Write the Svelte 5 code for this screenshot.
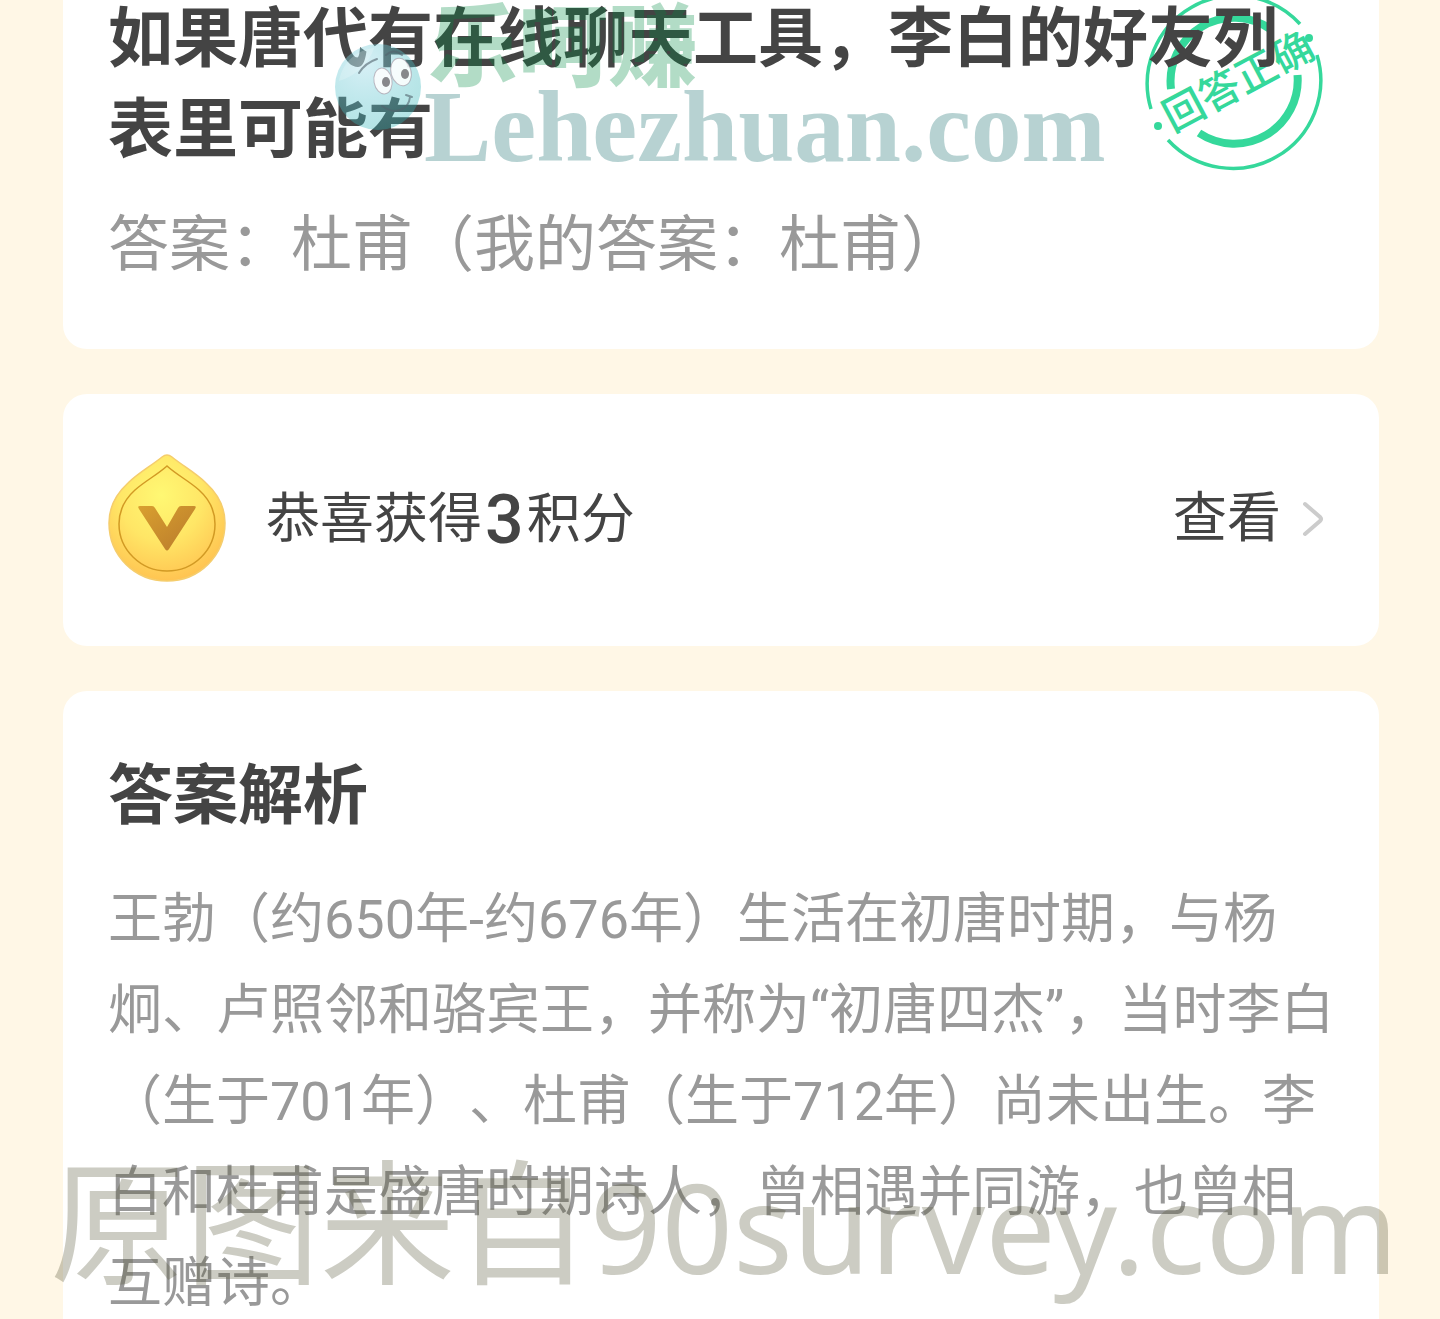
<script>
  const question = "如果唐代有在线聊天工具，李白的好友列表里可能有";
  const answer = "杜甫";
  const mine = "杜甫";
  const points = 3;
  const analysis =
    "王勃（约650年-约676年）生活在初唐时期，与杨炯、卢照邻和骆宾王，并称为“初唐四杰”，当时李白（生于701年）、杜甫（生于712年）尚未出生。李白和杜甫是盛唐时期诗人，曾相遇并同游，也曾相互赠诗。";
</script>

<div class="page">
  <main>
    <section class="card result">
      <!-- "correct" stamp, sits under the question text -->
      <svg class="stamp" viewBox="0 0 184 184" fill="none" stroke="#35d89b">
        <path d="M158 34 A88 88 0 0 0 9 119" stroke-width="3.5" />
        <path d="M175 65 A88 88 0 0 1 26 150" stroke-width="3.5" />
        <path d="M29 99 A63.5 63.5 0 0 1 128 39" stroke-width="8" />
        <path d="M155.5 85 A63.5 63.5 0 0 1 57 143" stroke-width="8" />
        <circle cx="16" cy="136" r="4" fill="#35d89b" stroke="none" />
        <circle cx="167" cy="48" r="4" fill="#35d89b" stroke="none" />
        <text
          x="96"
          y="106"
          text-anchor="middle"
          transform="rotate(-28 96 91)"
          fill="#35d89b"
          stroke="none">回答正确</text>
      </svg>
      <h1>{question}</h1>
      <p class="answer">答案：{answer}（我的答案：{mine}）</p>
    </section>

    <section class="card points">
      <svg class="coin" viewBox="0 0 118 128">
        <defs>
          <radialGradient id="face" cx="0.45" cy="0.32" r="0.72">
            <stop offset="0" stop-color="#fff873" />
            <stop offset="0.5" stop-color="#ffe666" />
            <stop offset="1" stop-color="#ffc04f" />
          </radialGradient>
          <linearGradient id="vee" x1="0" y1="0" x2="1" y2="1">
            <stop offset="0" stop-color="#d9a02f" />
            <stop offset="1" stop-color="#b97a2c" />
          </linearGradient>
        </defs>
        <path
          d="M54 3 Q59 -1 64 3 C75 12 88 19 98 29 C110 40 117 53 117 69 C117 102 91 127 59 127 C27 127 1 102 1 69 C1 53 8 40 20 29 C30 19 43 12 54 3 Z"
          fill="url(#face)"
          stroke="#f5cd6c"
          stroke-width="1.5"
        />
        <path
          d="M59 12 C69 21 81 27 91 36 C101 45 107 56 107 70 C107 96 86 117 59 117 C33 117 11 96 11 70 C11 56 17 45 27 36 C37 27 49 21 59 12 Z"
          fill="none"
          stroke="#d29a24"
          stroke-width="1.5"
        />
        <path
          d="M32 52 H44 Q46 52 47 54 L59 73 L70 54 Q71 52 73 52 H86 Q89 52 87 55 L61 95 Q59 98 57 95 L31 55 Q29 52 32 52 Z"
          fill="url(#vee)"
        />
      </svg>
      <p class="gain">恭喜获得<strong>{points}</strong>积分</p>
      <a href="#points">
        查看
        <svg class="chevron" viewBox="0 0 24 36" fill="none">
          <path
            d="M4 3 L19 16 Q21 18 19 20 L4 33"
            stroke="#ccc"
            stroke-width="4"
            stroke-linecap="round"
          />
        </svg>
      </a>
    </section>

    <section class="card analysis">
      <h2>答案解析</h2>
      <p>{analysis}</p>
    </section>
  </main>

  <!-- watermarks over the content -->
  <div class="mark site">
    <svg class="mascot" viewBox="0 0 88 88">
      <defs>
        <radialGradient id="ball" cx="0.35" cy="0.25" r="0.8">
          <stop offset="0" stop-color="#a4dcea" stop-opacity="0.45" />
          <stop offset="0.5" stop-color="#62c6d0" stop-opacity="0.4" />
          <stop offset="1" stop-color="#2bb3b4" stop-opacity="0.36" />
        </radialGradient>
      </defs>
      <circle cx="44" cy="44" r="43" fill="url(#ball)" />
      <path d="M5 38 C8 20 22 7 40 5 C36 18 24 32 5 38 Z" fill="#fff" opacity="0.2" />
      <g fill="#fff" fill-opacity="0.85" stroke="#a08f9c" stroke-opacity="0.6">
        <ellipse cx="49" cy="38" rx="9" ry="13" transform="rotate(-10 49 38)" />
        <ellipse cx="67" cy="29" rx="10" ry="14" transform="rotate(-16 67 29)" />
      </g>
      <g fill="#6c6c70" opacity="0.8">
        <ellipse cx="52" cy="39" rx="4" ry="5" />
        <ellipse cx="71" cy="31" rx="4" ry="5" />
      </g>
      <g fill="none" stroke="#52626c" stroke-opacity="0.6" stroke-linecap="round">
        <path d="M25 30 Q31 20 43 16" stroke-width="2" />
        <path d="M52 12 Q60 5 68 12" stroke-width="2" />
        <path d="M48 63 Q58 70 66 67 Q75 64 76 54 M72 52 L78 54" stroke-width="2" />
      </g>
    </svg>
    <span class="name">乐呵赚</span>
    <span class="domain">Lehezhuan.com</span>
  </div>
  <div class="mark source">原图来自<span>90survey.com</span></div>
</div>

<style>
  :global(body) {
    margin: 0;
    background: #fff7e6;
  }

  .page {
    position: relative;
    height: 100vh;
    overflow: hidden;
    font-family: Roboto, "Noto Sans CJK SC", sans-serif;
    text-spacing-trim: space-all;
    color: #444;
  }

  main {
    display: flex;
    flex-direction: column;
    gap: 45px;
    /* scrolled: the first card starts above the viewport */
    margin-top: -40px;
    padding: 0 61px 0 63px;
  }

  .card {
    position: relative;
    padding: 0 45px;
    border-radius: 24px;
    background: #fff;
  }

  h1,
  h2,
  p {
    margin: 0;
  }

  h1,
  h2 {
    position: relative;
    font-size: 65px;
    line-height: 91px;
    font-weight: 700;
  }

  /* ── Question ── */
  .result {
    padding-top: 34px;
    padding-bottom: 58px;
  }

  .answer {
    margin-top: 24px;
    font-size: 61px;
    line-height: 91px;
    color: #999;
  }

  .stamp {
    position: absolute;
    top: 30px;
    right: 53px;
    width: 184px;
    height: 184px;
  }

  .stamp text {
    font-family: "Noto Sans CJK SC", sans-serif;
    font-size: 41px;
    font-weight: 500;
  }

  /* ── Points ── */
  .points {
    display: flex;
    align-items: center;
    padding-top: 60px;
    padding-bottom: 64px;
    font-size: 54px;
    line-height: 80px;
  }

  .coin {
    width: 118px;
    height: 128px;
    margin-right: 40px;
  }

  .gain {
    display: flex;
    align-items: center;
    flex: 1;
    padding-top: 4px;
  }

  .gain strong {
    margin: 0 3px;
    font-size: 68px;
    font-weight: 500;
  }

  .points a {
    display: flex;
    align-items: center;
    gap: 20px;
    margin-right: 9px;
    padding-top: 2px;
    color: inherit;
    text-decoration: none;
  }

  .chevron {
    width: 24px;
    height: 36px;
  }

  /* ── Analysis ── */
  .analysis {
    padding: 60px 40px 56px 45px;
  }

  .analysis p {
    margin-top: 32px;
    font-size: 54px;
    line-height: 91px;
    color: #999;
  }

  /* ── Watermarks ── */
  .mark {
    position: absolute;
    white-space: nowrap;
    pointer-events: none;
  }

  .site {
    top: 0;
    left: 334px;
  }

  .mascot {
    position: absolute;
    top: 43px;
    left: 0;
    width: 88px;
    height: 88px;
  }

  .name {
    position: absolute;
    top: -5px;
    left: 94px;
    font-family: "Noto Sans CJK SC", sans-serif;
    font-size: 90px;
    line-height: 90px;
    font-weight: 900;
    color: rgba(0, 138, 65, 0.3);
  }

  .domain {
    position: absolute;
    top: 75px;
    left: 90px;
    font-family: "Liberation Serif", serif;
    font-size: 101px;
    line-height: 104px;
    font-weight: 700;
    color: rgba(18, 105, 105, 0.3);
  }

  .source {
    top: 1135px;
    left: 50px;
    font-family: "Noto Sans CJK SC", sans-serif;
    font-size: 135px;
    line-height: 160px;
    color: rgba(85, 85, 55, 0.3);
  }

  .source span {
    font-family: "Noto Sans", sans-serif;
    font-size: 125px;
  }
</style>
